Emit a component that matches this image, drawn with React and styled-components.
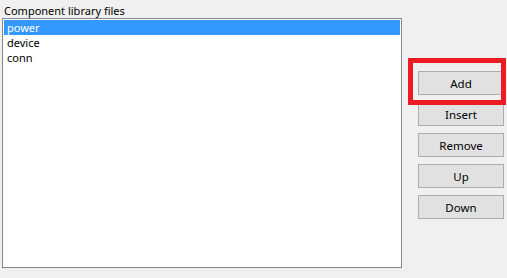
import React from "react";
import styled, { createGlobalStyle } from "styled-components";

const Global = createGlobalStyle`
  html, body { margin: 0; padding: 0; background: #f0f0f0; }
  body { font-family: "Noto Sans", "Segoe UI", "Liberation Sans", sans-serif; font-size: 11px; color: #000; }
`;

const Page = styled.div`
  display: flex;
  align-items: flex-start;
  gap: 16px;
  padding: 3px 0 0 2px;
  height: 278px;
  box-sizing: border-box;
  overflow: hidden;
`;

const LeftColumn = styled.div`
  display: flex;
  flex-direction: column;
`;

const Label = styled.div`
  height: 15px;
  line-height: 15px;
  padding-left: 2px;
  font-size: 11px;
`;

const ListBox = styled.div`
  width: 400px;
  height: 250px;
  box-sizing: border-box;
  border: 1px solid #828790;
  background: #fff;
  padding: 1px;
  display: flex;
  flex-direction: column;
`;

const Item = styled.div`
  height: 15px;
  line-height: 15px;
  padding-left: 3px;
  font-size: 11px;
  background: ${(p) => (p.$selected ? "#3399ff" : "transparent")};
  color: ${(p) => (p.$selected ? "#fff" : "#000")};
`;

const ButtonColumn = styled.div`
  position: relative;
  display: flex;
  flex-direction: column;
  gap: 7px;
  margin-top: 68px;
`;

const Button = styled.button`
  width: 86px;
  height: 24px;
  box-sizing: border-box;
  border: 1px solid #adadad;
  background: #e1e1e1;
  font-family: inherit;
  font-size: 11.5px;
  color: #000;
  padding: 0;
  margin: 0;
`;

const Highlight = styled.div`
  position: absolute;
  left: -10px;
  top: -13px;
  width: 98px;
  height: 47px;
  box-sizing: border-box;
  border: 5px solid #ed1c24;
  pointer-events: none;
`;

const files = ["power", "device", "conn"];
const buttons = ["Add", "Insert", "Remove", "Up", "Down"];

export default function App() {
  return (
    <>
      <Global />
      <Page>
        <LeftColumn>
          <Label>Component library files</Label>
          <ListBox>
            {files.map((f, i) => (
              <Item key={f} $selected={i === 0}>{f}</Item>
            ))}
          </ListBox>
        </LeftColumn>
        <ButtonColumn>
          {buttons.map((b) => (
            <Button key={b}>{b}</Button>
          ))}
          <Highlight />
        </ButtonColumn>
      </Page>
    </>
  );
}
